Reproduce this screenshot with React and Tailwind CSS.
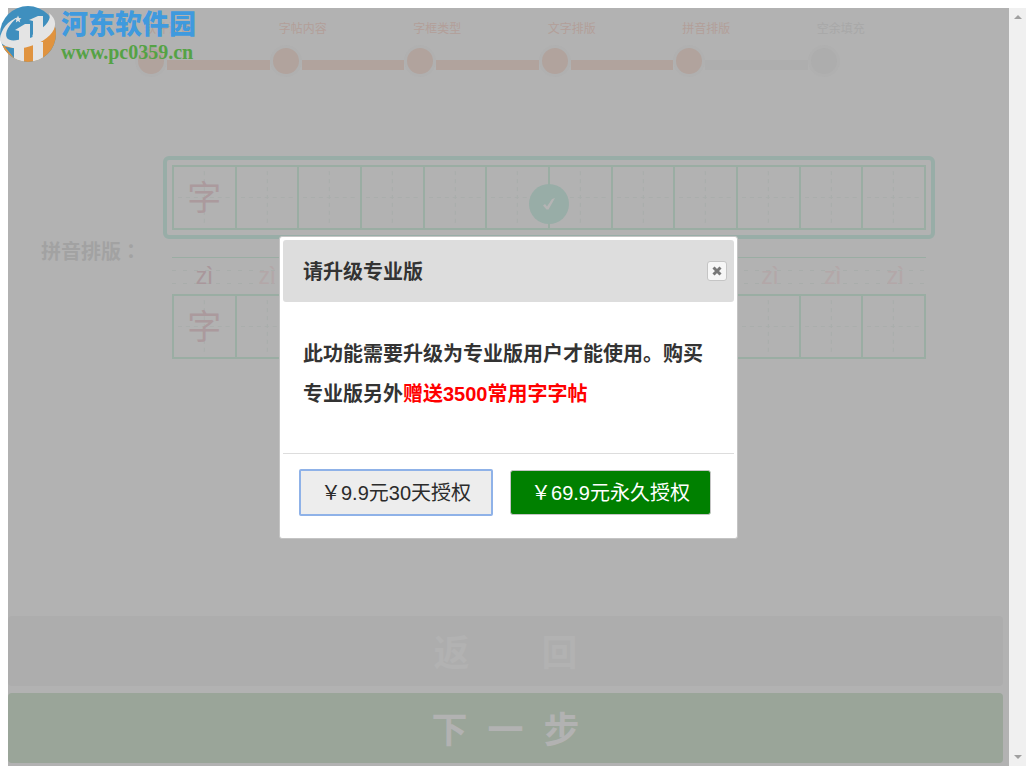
import React from "react";

const steps = [
  { label: "软件设置", done: true },
  { label: "字帖内容", done: true },
  { label: "字框类型", done: true },
  { label: "文字排版", done: true },
  { label: "拼音排版", done: true },
  { label: "空余填充", done: false },
];

const cells = Array.from({ length: 12 }, (_, i) => i);

function Steps() {
  return (
    <ol className="mr-[118px] ml-[76px] grid grid-cols-6 pt-3">
      {steps.map((step, i) => {
        const next = steps[i + 1];
        return (
          <li key={step.label}>
            <div
              className={
                "pt-px pl-[34px] text-center text-xs leading-4 " +
                (step.done ? "text-[#b39f99]" : "text-[#a8a8a8]")
              }
            >
              {step.label}
            </div>
            <div className="mt-2 flex items-end">
              <span
                className={
                  "mb-[7px] h-2.5 flex-1 " +
                  (i === 0 ? "" : step.done ? "bg-[#b1a39d]" : "bg-[#aeaeae]")
                }
              />
              <span
                className={
                  "size-8 rounded-full border-[3px] border-[#b0b0b0] " +
                  (step.done ? "bg-[#b1a39d]" : "bg-[#adadad]")
                }
              />
              <span
                className={
                  "mb-[7px] h-2.5 flex-1 " +
                  (!next ? "" : next.done ? "bg-[#b1a39d]" : "bg-[#aeaeae]")
                }
              />
            </div>
          </li>
        );
      })}
    </ol>
  );
}

function WritingGrid() {
  return (
    <div className="grid grid-cols-12 border border-[#9aada3]">
      {cells.map((i) => (
        <div
          key={i}
          className="relative flex h-[63px] items-center justify-center border border-[#9aada3]"
        >
          <svg className="absolute inset-0 size-full" viewBox="0 0 61 61" aria-hidden="true">
            <path
              d="M30.5 4V58M4 30.5H58"
              stroke="#a9adab"
              strokeWidth="1"
              strokeDasharray="4 4"
              fill="none"
            />
          </svg>
          {i === 0 && (
            <span className="relative text-[34px] leading-9 text-[#ab9a9d]">字</span>
          )}
        </div>
      ))}
    </div>
  );
}

function PinyinRow() {
  return (
    <div className="mb-2.5 grid h-[27px] grid-cols-12 border-t border-[#9aada3] bg-[linear-gradient(90deg,#a9adab_4px,transparent_4px),linear-gradient(90deg,#a9adab_4px,transparent_4px)] bg-[length:11px_1px,11px_1px] bg-[position:0_12px,0_25px] bg-repeat-x">
      {cells.map((i) => (
        <span
          key={i}
          className={
            "pt-1 pl-0.5 text-center font-['Noto_Sans',sans-serif] text-2xl leading-[26px] " +
            (i === 0 ? "text-[#a9979b]" : "text-[#b3a7a8]")
          }
        >
          zì
        </span>
      ))}
    </div>
  );
}

function LayoutChoice() {
  return (
    <div
      role="radiogroup"
      aria-labelledby="pinyin-label"
      className="mr-[74px] ml-[33px] flex pt-[79px]"
    >
      <div
        id="pinyin-label"
        className="w-[122px] shrink-0 pt-[81px] font-['Noto_Sans_CJK_TC',sans-serif] text-xl leading-7 font-bold whitespace-nowrap text-[#a2a2a2]"
      >
        拼音排版：
      </div>
      <div className="flex min-w-0 flex-1 flex-col gap-2">
        <label className="relative block rounded-md border-4 border-[#98ada7] px-[5px] py-[5px]">
          <input type="radio" name="pinyin" aria-label="无拼音" defaultChecked className="absolute size-px appearance-none" />
          <WritingGrid />
          <span className="absolute top-6 left-1/2 flex size-10 -translate-x-1/2 items-center justify-center rounded-full bg-[#98ada7]">
            <svg className="size-4" viewBox="0 0 16 16" aria-hidden="true">
              <path
                d="M2 9.5L4 8L6 10.5L11 3L14 2L7.5 13.5H5.5Z"
                fill="#b4b4b4"
              />
            </svg>
          </span>
        </label>
        <label className="relative block rounded-md border-4 border-transparent px-[5px] py-1.5">
          <input type="radio" name="pinyin" aria-label="带拼音" className="absolute size-px appearance-none" />
          <PinyinRow />
          <WritingGrid />
        </label>
      </div>
    </div>
  );
}

function Watermark() {
  return (
    <div className="absolute top-0 left-0 flex gap-1">
      <svg className="mt-1 h-[62px] w-[57px]" viewBox="0 4 57 62" aria-hidden="true">
        <defs>
          <clipPath id="disc">
            <circle cx="28" cy="34" r="28" />
          </clipPath>
        </defs>
        <g clipPath="url(#disc)">
          <rect x="0" y="4" width="57" height="62" fill="#3f8fbe" />
          <path d="M0 45C20 50 42 38 57 22V66H0Z" fill="#e0933f" />
          <path d="M14 47H24V66H14ZM33 42H43V66H33Z" fill="#e4e4e4" />
          <path d="M5 47L14 48V58Z" fill="#3f8fbe" />
        </g>
        <path
          d="M0 39C1 29 8 21 18 17C9 24 4 33 7 38C10 43 25 40 37 32C46 26 52 19 49 13C57 19 57 28 50 35C39 46 19 51 9 47C4 46 0 43 0 39Z"
          fill="#e4e4e4"
        />
        <path d="M15 30L25 24H30V44H19V31Z" fill="#e4e4e4" />
        <path d="M29 20L38 16H43V38H33V21Z" fill="#e4e4e4" />
        <path d="M30 23H32.5V37L30 38Z" fill="#3f8fbe" />
        <path
          d="M18 15.5L19 18L21.5 18.2L19.6 20L20.2 22.5L18 21L15.8 22.5L16.4 20L14.5 18.2L17 18Z"
          fill="#e4e4e4"
        />
      </svg>
      <div className="pt-2">
        <div className="pt-px text-[27px] leading-8 font-black text-[#3f9ade]">河东软件园</div>
        <div className="font-['Liberation_Serif',serif] text-xl leading-[22px] font-bold text-[#55a245]">
          www.pc0359.cn
        </div>
      </div>
    </div>
  );
}

function UpgradeDialog() {
  return (
    <div
      role="dialog"
      aria-labelledby="upgrade-title"
      className="absolute top-[236px] left-[279px] w-[459px] rounded-[3px] border border-[#c4c4c4] bg-white p-[3px] text-[#333]"
    >
      <div className="flex h-[62px] items-center justify-between rounded-[3px] bg-[#ddd] pr-[7px] pl-5">
        <h2 id="upgrade-title" className="pt-0.5 text-xl font-bold">
          请升级专业版
        </h2>
        <button
          type="button"
          aria-label="关闭"
          className="flex size-5 items-center justify-center rounded-[3px] border border-[#c5c5c5] bg-[#f6f6f6]"
        >
          <svg className="size-2.5" viewBox="0 0 10 10" aria-hidden="true">
            <path d="M1.5 1.5L8.5 8.5M8.5 1.5L1.5 8.5" stroke="#777" strokeWidth="3" />
          </svg>
        </button>
      </div>
      <p className="px-5 pt-8 pb-[39px] text-xl leading-10 font-bold">
        此功能需要升级为专业版用户才能使用。购买专业版另外
        <span className="text-[#f00]">赠送3500常用字字帖</span>
      </p>
      <div className="flex items-center gap-[17px] border-t border-[#ddd] px-4 pt-[15px] pb-[19px] text-xl">
        <button
          type="button"
          className="h-[47px] w-[194px] rounded-[2px] border-2 border-[#8fb2e8] bg-[#ededed] whitespace-nowrap text-[#2b2b2b]"
        >
          ￥9.9元30天授权
        </button>
        <button
          type="button"
          className="h-[45px] w-[201px] rounded-[3px] border border-[#c5c5c5] bg-[#008000] whitespace-nowrap text-white"
        >
          ￥69.9元永久授权
        </button>
      </div>
    </div>
  );
}

export default function App() {
  return (
    <div className="relative flex h-screen bg-white p-2 font-['Liberation_Sans','Noto_Sans_CJK_SC',sans-serif]">
      <main className="flex min-w-0 flex-1 flex-col bg-[#b2b2b2]">
        <Steps />
        <LayoutChoice />
        <div className="mt-auto mr-1.5 mb-[3px] flex flex-col gap-[7px] text-4xl font-bold text-[#b2b2b2]">
          <button type="button" className="h-[70px] rounded bg-[#adadad] pt-1.5 whitespace-pre">
            返{"　　"}回
          </button>
          <button type="button" className="h-[70px] rounded bg-[#9aa599] pt-1.5 whitespace-pre">
            下{"  "}一{"  "}步
          </button>
        </div>
      </main>
      <div
        className="flex w-[17px] shrink-0 flex-col items-center justify-between bg-[#f0f0f0] py-1.5"
        aria-hidden="true"
      >
        <svg className="h-1.5 w-2" viewBox="0 0 8 6">
          <path d="M0 5L4 1L8 5Z" fill="#a0a0a0" />
        </svg>
        <svg className="h-1.5 w-2" viewBox="0 0 8 6">
          <path d="M0 1L4 5L8 1Z" fill="#a0a0a0" />
        </svg>
      </div>
      <Watermark />
      <UpgradeDialog />
    </div>
  );
}
